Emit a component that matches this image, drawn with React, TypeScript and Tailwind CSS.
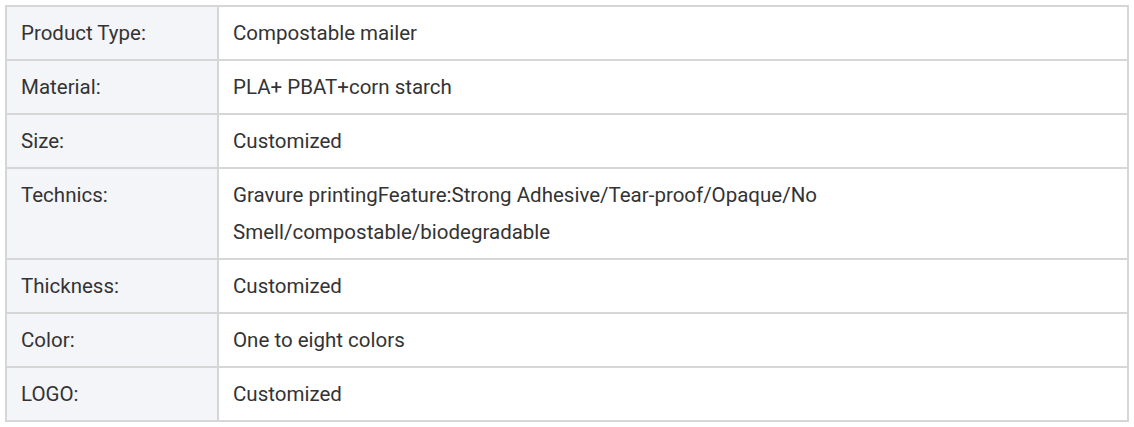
const rows: [string, string][] = [
  ["Product Type:", "Compostable mailer"],
  ["Material:", "PLA+ PBAT+corn starch"],
  ["Size:", "Customized"],
  ["Technics:", "Gravure printingFeature:Strong Adhesive/Tear-proof/Opaque/No Smell/compostable/biodegradable"],
  ["Thickness:", "Customized"],
  ["Color:", "One to eight colors"],
  ["LOGO:", "Customized"],
];

export default function App() {
  return (
    <div className="bg-white p-[5px] font-['Roboto',sans-serif] text-[20.5px] leading-[37px] text-[#333]">
      <table className="w-[1124px] border-collapse table-fixed">
        <colgroup>
          <col className="w-[212px]" />
          <col />
        </colgroup>
        <tbody>
          {rows.map(([k, v]) => (
            <tr key={k}>
              <td className="border-2 border-[#d6d6d6] bg-[#f3f5f9] px-[14px] py-[7.5px] align-top">{k}</td>
              <td className="border-2 border-[#d6d6d6] px-[14px] py-[7.5px] align-top">
                <div className="max-w-[620px]">{v}</div>
              </td>
            </tr>
          ))}
        </tbody>
      </table>
    </div>
  );
}
